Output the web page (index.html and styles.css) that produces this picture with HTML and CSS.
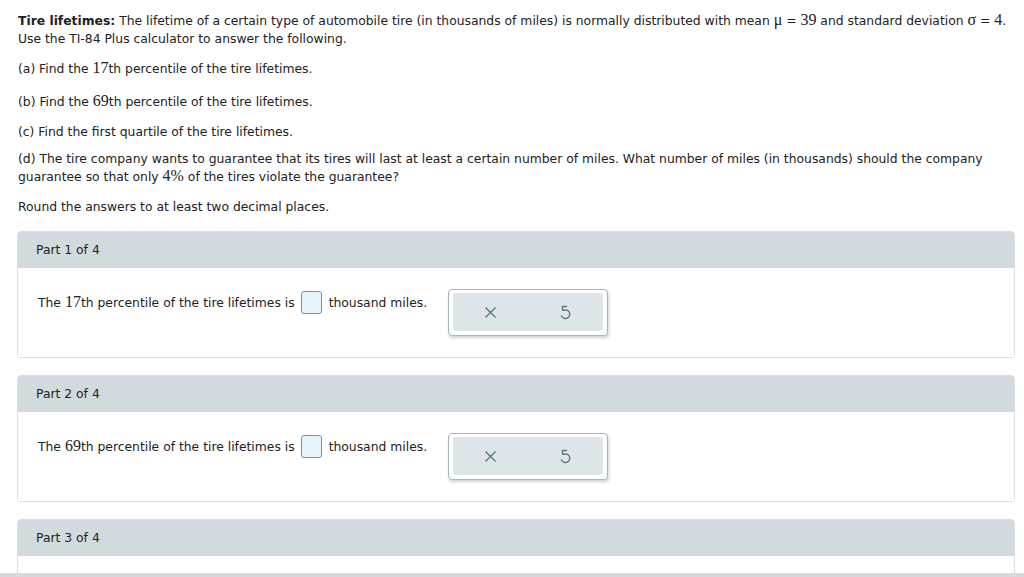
FILE: index.html
```html
<!DOCTYPE html>
<html>
<head>
<meta charset="utf-8">
<link rel="stylesheet" href="styles.css">
</head>
<body>
<div class="page">
  <div class="intro">
    <p class="lead"><b>Tire lifetimes:</b> The lifetime of a certain type of automobile tire (in thousands of miles) is normally distributed with mean <span class="m">μ</span> = <span class="m">39</span> and standard deviation <span class="m">σ</span> = <span class="m">4</span>.<br>Use the TI-84 Plus calculator to answer the following.</p>
    <p class="q qa">(a) Find the <span class="m">17</span>th percentile of the tire lifetimes.</p>
    <p class="q qb">(b) Find the <span class="m">69</span>th percentile of the tire lifetimes.</p>
    <p class="q qc">(c) Find the first quartile of the tire lifetimes.</p>
    <p class="q qd">(d) The tire company wants to guarantee that its tires will last at least a certain number of miles. What number of miles (in thousands) should the company guarantee so that only <span class="m">4%</span> of the tires violate the guarantee?</p>
    <p class="q qr">Round the answers to at least two decimal places.</p>
  </div>

  <div class="part">
    <div class="part-head">Part 1 of 4</div>
    <div class="part-body">
      <div class="answer">The <span class="m">17</span>th percentile of the tire lifetimes is<span class="box"></span>thousand miles.</div>
      <div class="tools">
        <div class="tools-in">
          <svg class="ic" width="13" height="13" viewBox="0 0 13 13"><path d="M1.5 1.5 L11.5 11.5 M11.5 1.5 L1.5 11.5" stroke="#557381" stroke-width="1.3" fill="none"/></svg>
          <svg class="ic" width="13" height="16" viewBox="0 0 13 16"><path d="M7.5 2.5 L3.5 2.5 L3.5 6.3 M4.4 6.4 A4.3 4.3 0 1 1 2.4 11.6" stroke="#557381" stroke-width="1.3" fill="none" stroke-linecap="round" stroke-linejoin="round"/></svg>
        </div>
      </div>
    </div>
  </div>

  <div class="part">
    <div class="part-head">Part 2 of 4</div>
    <div class="part-body">
      <div class="answer">The <span class="m">69</span>th percentile of the tire lifetimes is<span class="box"></span>thousand miles.</div>
      <div class="tools">
        <div class="tools-in">
          <svg class="ic" width="13" height="13" viewBox="0 0 13 13"><path d="M1.5 1.5 L11.5 11.5 M11.5 1.5 L1.5 11.5" stroke="#557381" stroke-width="1.3" fill="none"/></svg>
          <svg class="ic" width="13" height="16" viewBox="0 0 13 16"><path d="M7.5 2.5 L3.5 2.5 L3.5 6.3 M4.4 6.4 A4.3 4.3 0 1 1 2.4 11.6" stroke="#557381" stroke-width="1.3" fill="none" stroke-linecap="round" stroke-linejoin="round"/></svg>
        </div>
      </div>
    </div>
  </div>

  <div class="part">
    <div class="part-head">Part 3 of 4</div>
    <div class="part-body"></div>
  </div>
</div>
<div class="scrollbar"></div>
</body>
</html>
```
FILE: styles.css
```css
html, body {
  margin: 0;
  padding: 0;
  background: #fff;
  overflow: hidden;
  height: 577px;
}
body {
  font-family: "DejaVu Sans", Verdana, sans-serif;
  font-size: 12.35px;
  color: #222;
  position: relative;
}
.page {
  padding: 12px 9px 0 18px;
}
.intro p {
  margin: 0;
  line-height: 18px;
}
.m {
  font-family: "Liberation Serif", "Times New Roman", serif;
  font-size: 16px;
  line-height: 1;
}
.qa { margin-top: 12px !important; }
.qb { margin-top: 15px !important; }
.qc { margin-top: 12px !important; }
.qd { margin-top: 9px !important; }
.qr { margin-top: 12px !important; }

.part {
  margin-left: -1px;
  margin-top: 17px;
  border: 1px solid #d8dfe2;
  border-radius: 4px;
  overflow: hidden;
}
.intro + .part { margin-top: 15px; }
.part-head {
  background: #d2dade;
  height: 36px;
  line-height: 36px;
  padding-left: 18px;
  color: #222;
}
.part-body {
  height: 89px;
  display: flex;
  align-items: flex-start;
  padding: 21px 0 0 20px;
  box-sizing: border-box;
  background: #fff;
}
.answer {
  line-height: 24px;
  white-space: nowrap;
  padding-top: 2px;
}
.box {
  display: inline-block;
  width: 19px;
  height: 21px;
  border: 1px solid #4fa3b3;
  border-radius: 3px;
  background: #e8f5f8;
  vertical-align: middle;
  margin: 0 7px 0 6px;
  position: relative;
  top: -1px;
}
.tools {
  margin-left: 21px;
  border: 1px solid #9fb6bf;
  border-radius: 4px;
  padding: 3px 4px 4px;
  background: #fff;
  box-shadow: 1px 2px 3px rgba(60, 80, 90, 0.25);
}
.tools-in {
  width: 150px;
  height: 38px;
  background: #dde5e8;
  border-radius: 3px;
  display: flex;
  align-items: center;
  justify-content: space-around;
}
.ic { display: block; }
.scrollbar {
  position: absolute;
  left: 0;
  right: 0;
  bottom: 0;
  height: 4px;
  background: #d4dbde;
}
```
